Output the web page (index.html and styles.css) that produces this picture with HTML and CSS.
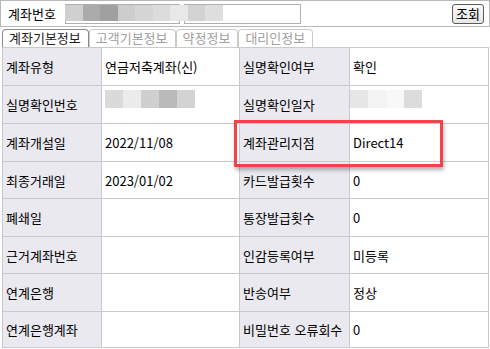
FILE: index.html
```html
<!DOCTYPE html>
<html lang="ko">
<head>
  <meta charset="UTF-8">
  <meta name="viewport" content="width=device-width, initial-scale=1.0">
  <title>계좌기본정보</title>
  <link rel="stylesheet" href="styles.css">
</head>
<body>

<!-- Search Bar -->
<div class="search-bar">
  <span class="search-label">계좌번호</span>
  <div class="acct-input">
    <div class="acct-box acct-box-1"></div>
    <div class="acct-box acct-box-2"></div>
    <div class="mask mask-top">
      <span style="background:#d0d0d0"></span>
      <span style="background:#ababab"></span>
      <span style="background:#a0a0a0"></span>
      <span style="background:#cdcdcd"></span>
      <span style="background:#d6d6d6"></span>
      <span style="background:#dcdcdc"></span>
      <span style="background:#e8e8e8"></span>
      <span style="background:#d2d2d2"></span>
      <span style="background:#dedede"></span>
    </div>
  </div>
  <button class="btn-search">조회</button>
</div>

<!-- Tabs -->
<div class="tabs">
  <div class="tab active">계좌기본정보</div>
  <div class="tab">고객기본정보</div>
  <div class="tab">약정정보</div>
  <div class="tab">대리인정보</div>
</div>

<!-- Info Grid -->
<div class="info-wrap">
  <div class="info-grid">
    <div class="cell label">계좌유형</div>
    <div class="cell">연금저축계좌(신)</div>
    <div class="cell label">실명확인여부</div>
    <div class="cell">확인</div>

    <div class="cell label">실명확인번호</div>
    <div class="cell">
      <div class="mask mask-cell">
        <span style="background:#dadada"></span>
        <span style="background:#ececec"></span>
        <span style="background:#cfcfcf"></span>
        <span style="background:#bababa"></span>
        <span style="background:#d3d3d3"></span>
      </div>
    </div>
    <div class="cell label">실명확인일자</div>
    <div class="cell cell-flush">
      <div class="mask mask-cell">
        <span style="background:#e6e6e6"></span>
        <span style="background:#f3f3f3"></span>
        <span style="background:#f8f8f8"></span>
        <span style="background:#dcdcdc"></span>
      </div>
    </div>

    <div class="cell label">계좌개설일</div>
    <div class="cell">2022/11/08</div>
    <div class="cell label">계좌관리지점</div>
    <div class="cell">Direct14</div>

    <div class="cell label">최종거래일</div>
    <div class="cell">2023/01/02</div>
    <div class="cell label">카드발급횟수</div>
    <div class="cell">0</div>

    <div class="cell label">폐쇄일</div>
    <div class="cell"></div>
    <div class="cell label">통장발급횟수</div>
    <div class="cell">0</div>

    <div class="cell label">근거계좌번호</div>
    <div class="cell"></div>
    <div class="cell label">인감등록여부</div>
    <div class="cell">미등록</div>

    <div class="cell label">연계은행</div>
    <div class="cell"></div>
    <div class="cell label">반송여부</div>
    <div class="cell">정상</div>

    <div class="cell label">연계은행계좌</div>
    <div class="cell"></div>
    <div class="cell label">비밀번호 오류회수</div>
    <div class="cell">0</div>
  </div>

  <!-- Highlight -->
  <div class="highlight"></div>
</div>

</body>
</html>
```

FILE: styles.css
```css
/* Base Styles */
* {
  margin: 0;
  padding: 0;
  box-sizing: border-box;
  font-family: "Noto Sans CJK KR", "DejaVu Sans", sans-serif;
}

body {
  width: 490px;
  background: #ffffff;
  color: #000;
  font-size: 13px;
}

/* Search Bar */
.search-bar {
  display: flex;
  align-items: center;
  width: 490px;
  height: 27px;
  border: 1px solid #b8b8b8;
  padding: 0 5px 0 7px;
}

.search-label {
  font-size: 13px;
  line-height: 14px;
  width: 57px;
}

.acct-input {
  position: relative;
  display: flex;
  gap: 4px;
  height: 20px;
}

.acct-box {
  height: 20px;
  border: 1px solid #b0b0b0;
  background: #fff;
}

.acct-box-1 {
  width: 115px;
}

.acct-box-2 {
  width: 117px;
}

.mask {
  display: flex;
}

.mask span {
  display: block;
  width: 18px;
  height: 100%;
}

.mask-top {
  position: absolute;
  left: 0;
  top: 1px;
  height: 16px;
}

.mask-top span {
  width: 17.5px;
}

.btn-search {
  margin-left: auto;
  width: 32px;
  height: 20px;
  border: 1px solid #5a5a5a;
  border-radius: 3px;
  background: linear-gradient(#fafafa, #e6e6e6);
  font-size: 13px;
  color: #000;
  line-height: 16px;
}

/* Tabs */
.tabs {
  display: flex;
  margin: 2px 0 0 2px;
  height: 18px;
}

.tab {
  height: 18px;
  padding: 0 7px 0 6px;
  border: 1px solid #cacaca;
  border-bottom: none;
  border-radius: 4px 4px 0 0;
  color: #a0a0a0;
  font-size: 13px;
  line-height: 16px;
  background: #fff;
}

.tab.active {
  border-color: #8a8a8a;
  color: #222;
}

/* Info Grid */
.info-wrap {
  position: relative;
  margin-left: 2px;
}

.info-grid {
  display: grid;
  grid-template-columns: 99px 138px 110px 139px;
  grid-template-rows: 38px 38px 38px 37px 38px 37px 38px 36px;
  width: 487px;
  border-top: 1px solid #c9c9ce;
  border-left: 1px solid #c9c9ce;
}

.cell {
  display: flex;
  align-items: center;
  padding-left: 3px;
  border-right: 1px solid #c9c9ce;
  border-bottom: 1px solid #c9c9ce;
  font-size: 13px;
  white-space: nowrap;
  background: #fff;
}

.cell.label {
  background: #eae9ef;
}

.cell-flush {
  padding-left: 0;
}

.mask-cell {
  align-self: flex-start;
  margin-top: 4px;
  height: 18px;
}

.highlight {
  position: absolute;
  left: 232px;
  top: 73px;
  width: 209px;
  height: 47px;
  border: 3px solid #f2434b;
  box-shadow: 1px 3px 4px rgba(0, 0, 0, 0.3);
}
```
